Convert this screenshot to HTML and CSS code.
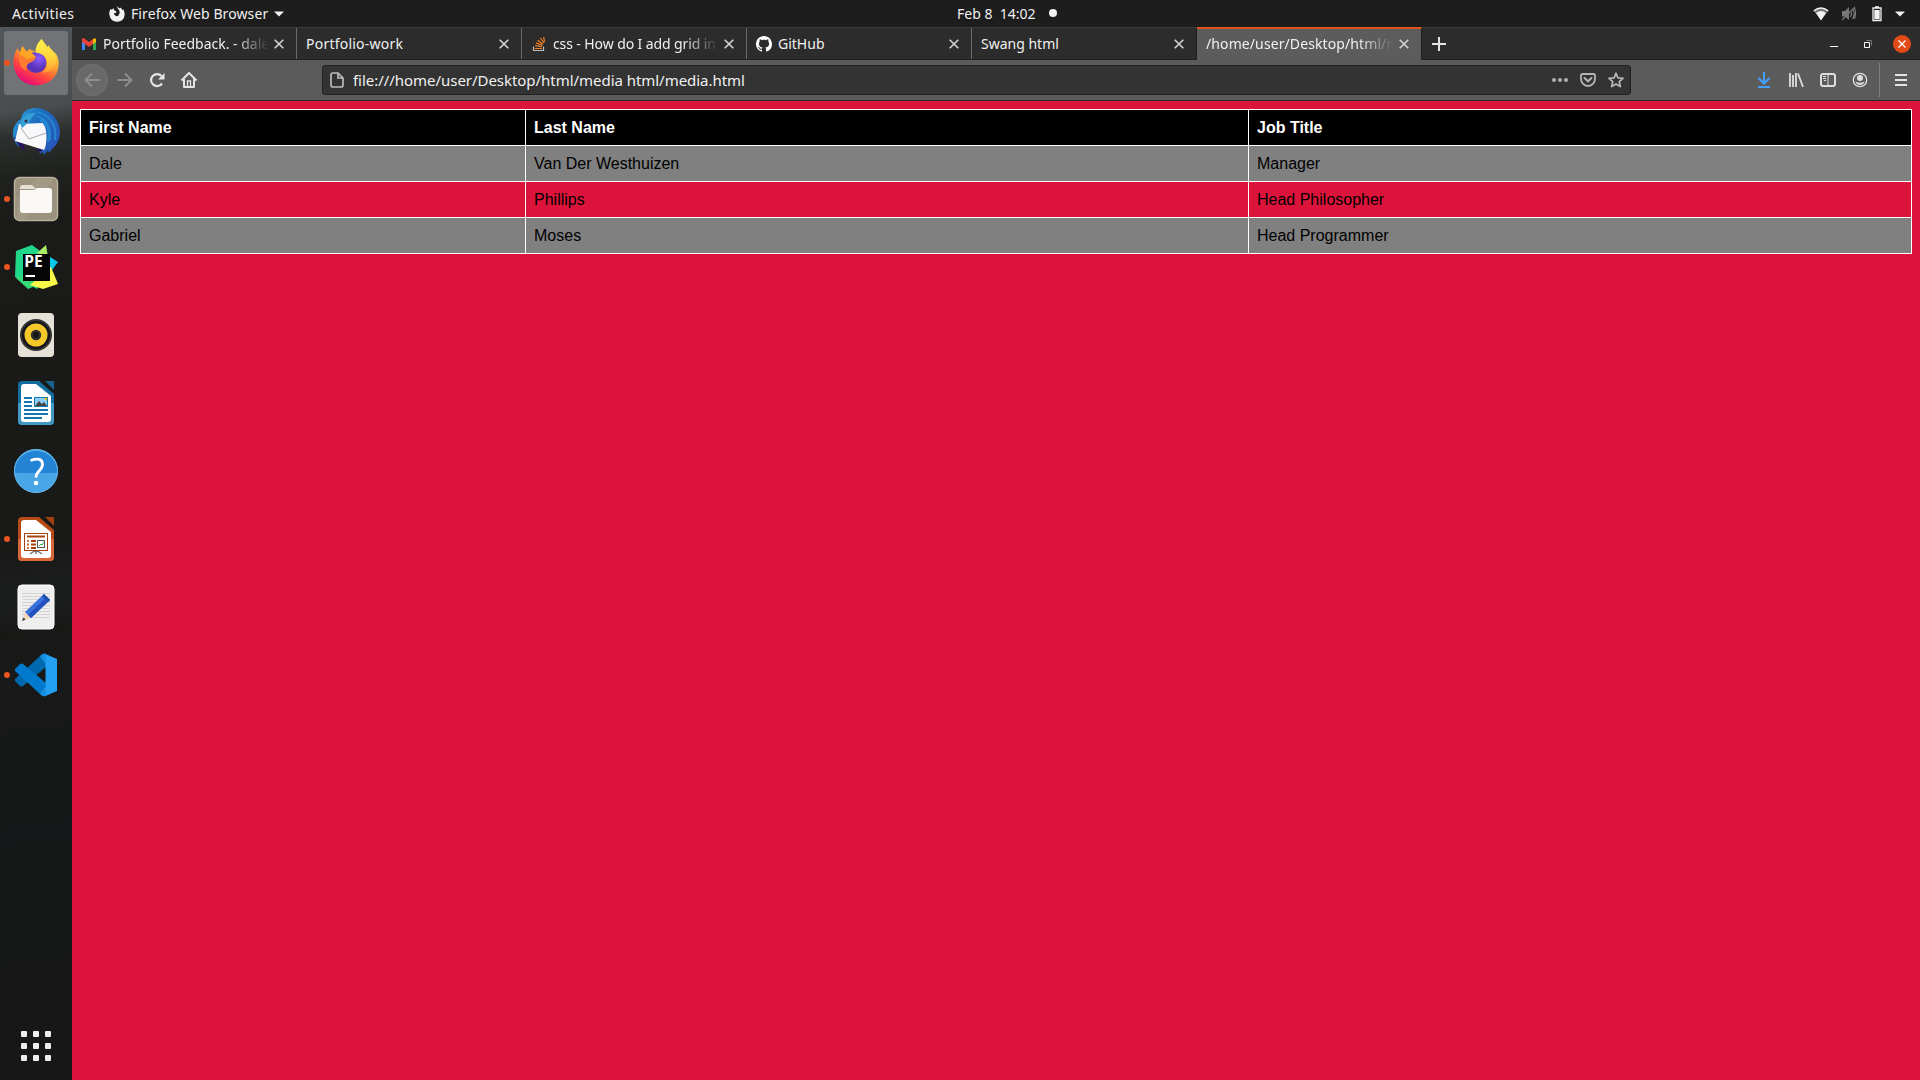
FILE: index.html
```html
<!DOCTYPE html>
<html lang="en">
<head>
<meta charset="utf-8">
<title>Desktop</title>
<link rel="stylesheet" href="styles.css">
</head>
<body>
<header class="topbar">
  <div class="topbar-left">
    <span class="label activities">Activities</span>
    <svg class="app-glyph" width="16" height="16" viewBox="0 0 16 16"><path d="M8.500 0q-.5 1.500.5 3 2 1 1.500 4.500Q9.500 10.500 7.500 10.300 5 9.800 5 7.300L7.600 6.500 7 5 5.200 4.200 4.500 2 3 3.800 1.500 3Q0 5.500.3 8.500 1.500 15.500 8 15.800q7-.3 7.700-7.300.1-3.500-1.700-5.500l-.3 1.200Q12.500 2 11 1.500l-.3 1Q9 1.500 8.500 0z" fill="#f2f2f2"/></svg>
    <span class="label app-name">Firefox Web Browser</span>
    <svg class="caret" width="10" height="6" viewBox="0 0 10 6"><path d="M0 .5h10L5 5.500z" fill="#f2f2f2"/></svg>
  </div>
  <div class="clock"><span class="label clock-text">Feb 8&nbsp; 14:02</span><i class="notice"></i></div>
  <div class="topbar-right">
    <svg width="16" height="16" viewBox="0 0 16 16"><path d="M.8 5Q8-1 15.200 5L8 14z" fill="#777"/><path d="M.8 5Q8-1 15.200 5" fill="none" stroke="#f2f2f2" stroke-width="1.600"/><path d="M3 7Q8 2.800 13 7L8 14.500z" fill="#f2f2f2"/></svg>
    <svg width="16" height="16" viewBox="0 0 16 16"><path d="M1 5h3l4-4v13l-4-3.500H1z" fill="#777"/><path d="M9.500 5q2 3 0 6M11.500 3q3.500 5 0 10M13.500 2q2 5 0 11M1 14L14 1" fill="none" stroke="#777" stroke-width="1.200"/></svg>
    <svg width="16" height="16" viewBox="0 0 16 16"><path d="M4 2h8v12.500H4zM6 .8h4" fill="none" stroke="#f2f2f2" stroke-width="1.300"/><path d="M5.300 4h5.400v9.200H5.300z" fill="#f2f2f2"/></svg>
    <svg class="menu-caret" width="10" height="6" viewBox="0 0 10 6"><path d="M0 .5h10L5 5.500z" fill="#f2f2f2"/></svg>
  </div>
</header>
<div class="workspace">
  <nav class="dock">
    <div class="launcher focused running"><svg width="48" height="48" viewBox="0 0 48 48">
      <defs><linearGradient id="fx" x1=".85" y1=".1" x2=".35" y2="1"><stop offset="0" stop-color="#fff14a"/><stop offset=".4" stop-color="#ffa22e"/><stop offset=".72" stop-color="#ff4440"/><stop offset="1" stop-color="#e8087c"/></linearGradient><radialGradient id="fp" cx=".65" cy=".3"><stop offset="0" stop-color="#9059ff"/><stop offset="1" stop-color="#5a34b8"/></radialGradient><linearGradient id="ff" x1="0" y1="0" x2="0" y2="1"><stop offset="0" stop-color="#fff44f"/><stop offset=".6" stop-color="#ffd03a"/><stop offset="1" stop-color="#ff9a2e"/></linearGradient></defs>
      <path d="M10.500 7q-2 3-1.500 7Q6 12 5.500 9 1 16 1.500 25 4 45 24 46.500 45 45 46.700 25q0-7-4-12l.3 4Q35 8 29.700 0 24 6 24 13l-7-3-2 3q-3-2-4.500-6z" fill="url(#fx)"/>
      <circle cx="24" cy="23.500" r="10.500" fill="url(#fp)"/>
      <path d="M29.700 0Q23 6 23.500 13.500q10 1 11.500 10 0 7-5 10 9 1 13-8Q46 15 39 10L36 6l-.5 3Q31 6 29.700 0z" fill="url(#ff)"/>
      <path d="M7 15q6-2 9 2l8 1q-1 4-7 6-4 3-2 8-9-3-8-17z" fill="#ff7b30"/><path d="M10.500 7L7 15l8 5 9-2-7-7-2 2z" fill="#ffa526"/>
    </svg></div>
    <div class="launcher"><svg width="48" height="48" viewBox="0 0 48 48">
      <defs><linearGradient id="tb" x1="0" x2="1" y2=".7"><stop offset="0" stop-color="#31aadf"/><stop offset=".45" stop-color="#1c6dc0"/><stop offset="1" stop-color="#2756ba"/></linearGradient></defs>
      <path d="M10 8c4-7 13-8 20-6 10 3 17 11 18 22 0 8-3 14-8 18l-3 4-1-3-4 5-1-3-4 2c4-6 6-14 4-22L20 22 7 40C-2 32-1 18 9 12z" fill="url(#tb)"/><path d="M2 30q3 8 11 14l-2-9zM24 43q5 3 8-1l3-10z" fill="#29125e"/>
      <path d="M7 17l23-1c5 2 6 20 2 27L3 34z" fill="#f8f8fa"/><path d="M9 21l8 11 17-6" stroke="#aaa" fill="none"/><path d="M10 12l5-5 9-1q-5 4-7 9l-7 6q-3-4 0-9z" fill="#35a0d8"/><path d="M26 5c12 4 19 13 17 28M25 9c9 3 14 11 13 24M36 35c2-11 0-18-8-22" fill="none" stroke="#2487cf" stroke-width="2"/><circle cx="14" cy="14" r="1.500" fill="#382d3e"/>
    </svg></div>
    <div class="launcher running"><svg width="48" height="48" viewBox="0 0 48 48">
      <rect x="2.500" y="2.500" width="43" height="43" rx="5" fill="#9b927e" stroke="#b9b19d" stroke-width="1.500"/><path d="M24 3h18L12 45H5V24z" fill="#a39a86"/><path d="M8 14V13q0-3 3-3h9l4 4z" fill="#e8e1d3"/><path d="M8 15h14l3-2h12q3 0 3 3v19q0 3-3 3H11q-3 0-3-3z" fill="#faf9f8"/>
    </svg></div>
    <div class="launcher running"><svg width="48" height="48" viewBox="0 0 48 48">
      <path d="M4 8L20 2l20 15-15 29L3 34z" fill="#21d789"/><path d="M4 35L16 46l14-6-10-10z" fill="#35dc75"/><path d="M25 10L34 2l2 12z" fill="#a8ed61"/><path d="M35 12l11 7-12 16z" fill="#08c8ef"/><path d="M18 42l21-18 7 17-15 5z" fill="#fcf84a"/><rect x="11" y="11" width="27" height="27" fill="#050505"/><text class="pe" x="12.300" y="24">PE</text><path d="M13.500 33H23" stroke="#fff" stroke-width="2"/>
    </svg></div>
    <div class="launcher"><svg width="48" height="48" viewBox="0 0 48 48">
      <rect x="6" y="2" width="36" height="44" rx="4" fill="#e5e1d7"/><circle cx="24" cy="24" r="16" fill="#343434"/><circle cx="24" cy="24" r="14" fill="#15171d"/><circle cx="24" cy="24" r="11.500" fill="#f4c82a"/><circle cx="24" cy="24" r="5.200" fill="#303030"/><circle cx="24" cy="24" r="3" fill="#151515"/>
    </svg></div>
    <div class="launcher"><svg width="48" height="48" viewBox="0 0 48 48">
      <path d="M10 2h17l15 13v27q0 4-4 4H10q-4 0-4-4V6q0-4 4-4z" fill="#136d9e"/><path d="M6 24h36v18q0 4-4 4H10q-4 0-4-4z" fill="#4299c5"/><path d="M33 2h9v9z" fill="#17638c"/><path d="M12 5h12l15 12v23q0 3-3 3H12q-3 0-3-3V8q0-3 3-3z" fill="#fff"/><path d="M12 19h8M12 23h8M12 27h8M12 31h24M12 35h24M12 39h18" stroke="#1479ae" stroke-width="1.800"/><rect x="22.500" y="18.500" width="13" height="9" fill="#8bcdf5" stroke="#1479ae"/><path d="M23 27l4-5 3 3 2-2 3 4z" fill="#444"/><path d="M32 19h3v3z" fill="#ffb500"/>
    </svg></div>
    <div class="launcher"><svg width="48" height="48" viewBox="0 0 48 48">
      <circle cx="24" cy="24" r="22" fill="#48a6e7"/><path d="M2 26a22 22 0 0 1 44 0z" fill="#2384d6"/><circle cx="24" cy="24" r="21.500" fill="none" stroke="#65b4e7"/><path d="M18.500 13.500q11.500-4 12 3.500c0 7-6.500 6.500-6.500 13.500" fill="none" stroke="#fff" stroke-width="2.800"/><circle cx="24" cy="36" r="2.300" fill="#fff"/>
    </svg></div>
    <div class="launcher running"><svg width="48" height="48" viewBox="0 0 48 48">
      <path d="M10 2h17l15 13v27q0 4-4 4H10q-4 0-4-4V6q0-4 4-4z" fill="#b74b16"/><path d="M6 24h36v18q0 4-4 4H10q-4 0-4-4z" fill="#d96838"/><path d="M33 2h9v9z" fill="#9f410f"/><path d="M12 5h12l15 12v23q0 3-3 3H12q-3 0-3-3V8q0-3 3-3z" fill="#fff"/><path d="M18 39l6-4 6 4M24 35v4" stroke="#777" stroke-width="1.500" fill="none"/><rect x="12.500" y="18.500" width="23" height="17" fill="#fff" stroke="#a5430e"/><path d="M15 21.500h18M19 26h5M19 29.500h5M19 33h5" stroke="#a5430e" stroke-width="2"/><path d="M15 26h2M15 29.500h2M15 33h2" stroke="#d4703a" stroke-width="2"/><rect x="25.500" y="25.500" width="7" height="7" fill="#fff" stroke="#555"/><path d="M27 31l2-2 1 1 2-3" stroke="#2bb14b" fill="none"/>
    </svg></div>
    <div class="launcher"><svg width="48" height="48" viewBox="0 0 48 48">
      <rect x="6" y="2" width="36" height="44" rx="4" fill="#efefef" stroke="#fff"/><path d="M10 10.500h28M10 13.500h28M10 16.500h28M10 19.500h28M10 22.500h28M10 25.500h28M10 28.500h28M10 31.500h28M10 34.500h28" stroke="#d2d2d2"/><path d="M10 38l3-9 6 6z" fill="#f4d7b7"/><path d="M10 38l1.500-3.500 2 2z" fill="#333"/><path d="M13 29L32 11l6 6-19 18z" fill="#3870dc"/><path d="M16 32L35 14l3 3-19 18z" fill="#2350bd"/><path d="M30 13l2-2 6 6-2 2z" fill="#204eac"/>
    </svg></div>
    <div class="launcher running"><svg width="48" height="48" viewBox="0 0 48 48">
      <path d="M3 30l5 5q1 1 3 0L34 16V3q-3-2-6 2L3 28z" fill="#0068ac"/><path d="M3 18l5-5q1-1 3 0l23 19v13q-3 1-6-2L3 20z" fill="#007acc"/><path d="M33.500 3L45 8v32l-11.500 5z" fill="#24a0f2"/><path d="M28 5q4-3 6-2v42q-3 1-6-2l6-8V14z" fill="#1690e0"/>
    </svg></div>
    <div class="show-apps"><i></i><i></i><i></i><i></i><i></i><i></i><i></i><i></i><i></i></div>
  </nav>
  <main class="browser">
    <div class="tabs">
      <div class="tab"><svg class="favicon" width="16" height="16" viewBox="0 0 16 16"><path d="M1 5l3 2v7H1z" fill="#4285f4"/><path d="M12 7l3-2v9h-3z" fill="#34a853"/><path d="M1 3q1-2 3 0l4 3 4-3v5l-4 3-4-3v0L1 6z" fill="#ea4335"/><path d="M12 3q3-2 3 1v2l-3 2z" fill="#fbbc04"/></svg><span class="label title t1">Portfolio Feedback. - dale</span><svg class="x" width="10" height="10" viewBox="0 0 10 10"><path d="M.7.700l8.600 8.600M9.300.700L.7 9.300"/></svg></div>
      <div class="tab"><span class="label title t2">Portfolio-work</span><svg class="x" width="10" height="10" viewBox="0 0 10 10"><path d="M.7.700l8.600 8.600M9.300.700L.7 9.300"/></svg></div>
      <div class="tab"><svg class="favicon" width="16" height="16" viewBox="0 0 16 16"><path d="M2.500 10.500v4h10v-4" fill="none" stroke="#bcbbbb" stroke-width="1.200"/><path d="M4 12.500h7M4.200 9.700l6.800 1M5 6.900l6.300 2.300M6.700 4.300l5.300 4M9.500 2l3.500 5M12.700 1l.8 5" stroke="#f48024" stroke-width="1.200"/></svg><span class="label title t3">css - How do I add grid in</span><svg class="x" width="10" height="10" viewBox="0 0 10 10"><path d="M.7.700l8.600 8.600M9.300.700L.7 9.300"/></svg></div>
      <div class="tab"><svg class="favicon" width="16" height="16" viewBox="0 0 16 16"><path fill="#fff" d="M8 0C3.580 0 0 3.580 0 8c0 3.540 2.290 6.530 5.470 7.590.4.070.55-.17.55-.38 0-.19-.01-.82-.01-1.490-2.010.37-2.530-.49-2.690-.94-.09-.23-.48-.94-.82-1.130-.28-.15-.68-.52-.01-.53.63-.01 1.080.58 1.230.82.72 1.210 1.870.87 2.330.66.07-.52.28-.87.510-1.070-1.780-.2-3.640-.89-3.640-3.950 0-.87.31-1.590.82-2.150-.08-.2-.36-1.020.08-2.120 0 0 .67-.21 2.200.82.64-.18 1.320-.27 2-.27s1.360.09 2 .27c1.530-1.040 2.200-.82 2.200-.82.44 1.100.16 1.920.08 2.120.51.56.82 1.270.82 2.150 0 3.070-1.870 3.750-3.650 3.950.29.25.54.73.54 1.480 0 1.070-.01 1.930-.01 2.200 0 .21.15.46.55.38A8.010 8.010 0 0 0 16 8c0-4.420-3.580-8-8-8z"/></svg><span class="label title t4">GitHub</span><svg class="x" width="10" height="10" viewBox="0 0 10 10"><path d="M.7.700l8.600 8.600M9.300.700L.7 9.300"/></svg></div>
      <div class="tab before-active"><span class="label title t5">Swang html</span><svg class="x" width="10" height="10" viewBox="0 0 10 10"><path d="M.7.700l8.600 8.600M9.300.700L.7 9.300"/></svg></div>
      <div class="tab active"><span class="label title t6">/home/user/Desktop/html/m</span><svg class="x" width="10" height="10" viewBox="0 0 10 10"><path d="M.7.700l8.600 8.600M9.300.700L.7 9.300"/></svg></div>
      <svg class="new-tab" width="14" height="14" viewBox="0 0 14 14"><path d="M7 0v14M0 7h14" stroke="#e4e4e4" stroke-width="2"/></svg>
      <div class="window-buttons">
        <svg width="8" height="16" viewBox="0 0 8 16"><path d="M0 10.500h8" stroke="#fff"/></svg>
        <svg width="8" height="8" viewBox="0 0 8 8"><path d="M2.500.5h5v5" fill="none" stroke="#777"/><path d="M.5 2.500h5v5h-5z" fill="none" stroke="#fff"/></svg>
        <span class="close"><svg width="8" height="8" viewBox="0 0 8 8"><path d="M.5.5l7 7M7.500.5l-7 7" stroke="#fff" stroke-width="1.300"/></svg></span>
      </div>
    </div>
    <div class="toolbar">
      <div class="nav-buttons">
        <span class="back"><svg width="16" height="16" viewBox="0 0 16 16"><path d="M15.500 8H1.500M8 1.500L1.500 8 8 14.500" fill="none" stroke="#8f8f8f" stroke-width="1.800"/></svg></span>
        <svg width="16" height="16" viewBox="0 0 16 16"><path d="M.5 8h14M8 1.500L14.500 8 8 14.500" fill="none" stroke="#8f8f8f" stroke-width="1.800"/></svg>
        <svg width="16" height="16" viewBox="0 0 16 16"><path d="M13 11.500A6 6 0 1 1 12.500 4" fill="none" stroke="#e4e4e4" stroke-width="2.200"/><path d="M15.500 1v6.500H9z" fill="#e4e4e4"/></svg>
        <svg width="16" height="16" viewBox="0 0 16 16"><path d="M.5 8.500L8 1l7.500 7.500M3 7v8h10V7" fill="none" stroke="#e4e4e4" stroke-width="2" stroke-linejoin="round"/><path d="M6.500 15V9h3v6" fill="none" stroke="#e4e4e4" stroke-width="1.300"/></svg>
      </div>
      <div class="urlbar">
        <svg width="16" height="16" viewBox="0 0 16 16"><path d="M4 1h5l5 5v7q0 2-2 2H4q-2 0-2-2V3q0-2 2-2zM9 1v5h5" fill="none" stroke="#bababa" stroke-width="1.700"/></svg>
        <span class="label url">file:///home/user/Desktop/html/media html/media.html</span>
        <div class="url-actions">
          <svg width="16" height="16" viewBox="0 0 16 16"><g fill="#b5b5b5"><circle cx="2" cy="8" r="2"/><circle cx="8" cy="8" r="2"/><circle cx="14" cy="8" r="2"/></g></svg>
          <svg width="16" height="16" viewBox="0 0 16 16"><path d="M2.500 2h11Q15 2 15 3.500V7A7 7 0 0 1 1 7V3.500Q1 2 2.500 2z" fill="none" stroke="#b5b5b5" stroke-width="1.800"/><path d="M4.500 6L8 9.300 11.500 6" fill="none" stroke="#b5b5b5" stroke-width="2" stroke-linecap="round"/></svg>
          <svg width="16" height="16" viewBox="0 0 16 16"><path d="M8 1.300l2 4.500 5 .5-3.700 3.300 1 5L8 12l-4.300 2.600 1-5L1 6.300l5-.5z" fill="none" stroke="#b5b5b5" stroke-width="1.800" stroke-linejoin="round"/></svg>
        </div>
      </div>
      <div class="tools">
        <svg width="16" height="16" viewBox="0 0 16 16"><path d="M8 0v11M2.500 6L8 11.500 13.500 6M2 15h12" fill="none" stroke="#45a1ff" stroke-width="2"/></svg>
        <svg width="16" height="16" viewBox="0 0 16 16"><path d="M2 1v14M5 3v12M8 1v14M10 1.500l5 13.500" stroke="#dedede" stroke-width="1.800"/></svg>
        <svg width="16" height="16" viewBox="0 0 16 16"><rect x="1" y="2" width="14" height="12" rx="2" fill="none" stroke="#dedede" stroke-width="2"/><path d="M8 2v12" stroke="#dedede"/><path d="M3 4.500h3M3 6.500h3M4 8.500h2" stroke="#dedede"/></svg>
        <svg width="16" height="16" viewBox="0 0 16 16"><circle cx="8" cy="8" r="6.700" fill="none" stroke="#dedede" stroke-width="1.300"/><circle cx="8" cy="6" r="3" fill="#dedede"/><path d="M3.500 9.500Q8 12 12.500 9.500 11.500 13 8 13T3.500 9.500z" fill="#dedede"/></svg>
        <i class="divider"></i>
        <svg width="12" height="16" viewBox="0 0 12 16"><path d="M0 3h12M0 8h12M0 13h12" stroke="#e4e4e4" stroke-width="2"/></svg>
      </div>
    </div>
    <section class="page">
      <table class="staff">
        <colgroup><col class="c1"><col class="c2"><col class="c3"></colgroup>
        <tr><th>First Name</th><th>Last Name</th><th>Job Title</th></tr>
        <tr><td>Dale</td><td>Van Der Westhuizen</td><td>Manager</td></tr>
        <tr><td>Kyle</td><td>Phillips</td><td>Head Philosopher</td></tr>
        <tr><td>Gabriel</td><td>Moses</td><td>Head Programmer</td></tr>
      </table>
    </section>
  </main>
</div>
</body>
</html>
```
FILE: styles.css
```css
* { box-sizing: border-box; }
body { margin: 0; width: 1920px; height: 1080px; overflow: hidden; display: flex; flex-direction: column; background: #1d1d1d; color: #f0f0f0; font: 14px "Noto Sans", sans-serif; }
svg { display: block; flex: none; }
.label { white-space: pre; }
.topbar { height: 27px; display: flex; align-items: center; background: #1d1d1d; }
.topbar-left { width: 957px; display: flex; align-items: center; padding-left: 12px; }
.activities { width: 97px; letter-spacing: .4px; }
.app-name { width: 137px; margin-left: 6px; letter-spacing: .1px; }
.caret { margin-left: 6px; }
.clock { display: flex; align-items: center; padding-bottom: 1px; }
.clock-text { width: 79px; }
.notice { width: 8px; height: 8px; border-radius: 50%; background: #f2f2f2; margin-left: 13px; }
.topbar-right { margin-left: auto; display: flex; align-items: center; gap: 12px; padding-right: 15px; }
.menu-caret { margin-left: -2px; }
.workspace { flex: 1; min-height: 0; display: flex; }
.dock { width: 72px; display: flex; flex-direction: column; align-items: center; gap: 4px; padding-top: 4px; background: linear-gradient(172deg, #51565a 0, #4a4d4f 85px, #2d302e 110px, #20221f 150px, #1a1a19 200px, #191a18 520px, #1c1e1e 570px, #181917 600px, #161819 800px, #171716 100%); }
.launcher { width: 64px; height: 64px; display: flex; align-items: center; justify-content: center; position: relative; border-radius: 3px; }
.focused { background: #717376; }
.running::before { content: ""; position: absolute; left: 0; top: 29px; width: 6px; height: 6px; border-radius: 50%; background: #e95420; }
.pe { font: bold 15.5px "Open Sans", sans-serif; fill: #fff; }
.show-apps { margin-top: auto; margin-bottom: 19px; display: grid; grid-template-columns: repeat(3, 6px); gap: 6px; }
.show-apps i { width: 6px; height: 6px; border-radius: 1px; background: #eeeeec; }
.browser { flex: 1; min-width: 0; display: flex; flex-direction: column; }
.tabs { height: 33px; display: flex; align-items: center; background: #2c2c2c; border-top: 1px solid #3b3b3b; border-bottom: 1px solid #1e1e1e; }
.tab { width: 225px; height: 31px; flex: none; display: flex; align-items: center; padding: 0 12px 0 9px; border-right: 1px solid #6b6b6b; }
.before-active { border-color: #1e1e1e; }
.active { height: 33px; margin: -1px 0; background: #5c5c5c; border-top: 2px solid #e2501c; border-right-color: #1e1e1e; }
.active .label, .active .x { margin-top: -2px; }
.favicon { margin-right: 6px; }
.title { flex: 1; min-width: 0; overflow: hidden; margin-right: 5px; }
.t1, .t3, .t6 { mask-image: linear-gradient(90deg, #000 calc(100% - 36px), transparent); }
.t2 { letter-spacing: .22px; }
.t3 { letter-spacing: -.1px; }
.t6 { letter-spacing: .1px; }
.x { fill: none; stroke: #d4d4d4; stroke-width: 1.600px; }
.new-tab { margin-left: 10px; }
.window-buttons { margin-left: auto; display: flex; align-items: center; gap: 26px; padding-right: 9px; }
.close { width: 18px; height: 18px; border-radius: 50%; background: #e24b17; display: flex; align-items: center; justify-content: center; margin-left: -5px; }
.toolbar { height: 41px; display: flex; align-items: center; background: #5b5b5b; border-bottom: 1px solid #292929; padding: 0 13px 0 4px; }
.nav-buttons { width: 246px; display: flex; align-items: center; gap: 16px; }
.back { width: 32px; height: 32px; border-radius: 50%; border: 1px solid #757575; background: #696969; display: flex; align-items: center; justify-content: center; margin-right: -7px; }
.urlbar { width: 1309px; height: 30px; display: flex; align-items: center; background: #333; border: 1px solid #212121; border-radius: 3px; padding: 0 6px; }
.url { margin-left: 8px; font-size: 15px; letter-spacing: -.04px; }
.url-actions { margin-left: auto; display: flex; gap: 12px; }
.tools { margin-left: auto; display: flex; align-items: center; gap: 16px; }
.divider { width: 1px; height: 34px; background: #808080; margin: 0 -1px 0 -5px; }
.page { flex: 1; background: #dc143c; padding: 8px; color: #000; }
.staff { width: 1832px; table-layout: fixed; border-collapse: collapse; font: 16px/19px "Liberation Sans", Arial, sans-serif; }
.c1 { width: 445px; }
.c2 { width: 723px; }
.staff th, .staff td { border: 1px solid #fff; padding: 8px; text-align: left; }
.staff th { background: #000; color: #fff; }
.staff tr:nth-child(even) { background: gray; }
```
